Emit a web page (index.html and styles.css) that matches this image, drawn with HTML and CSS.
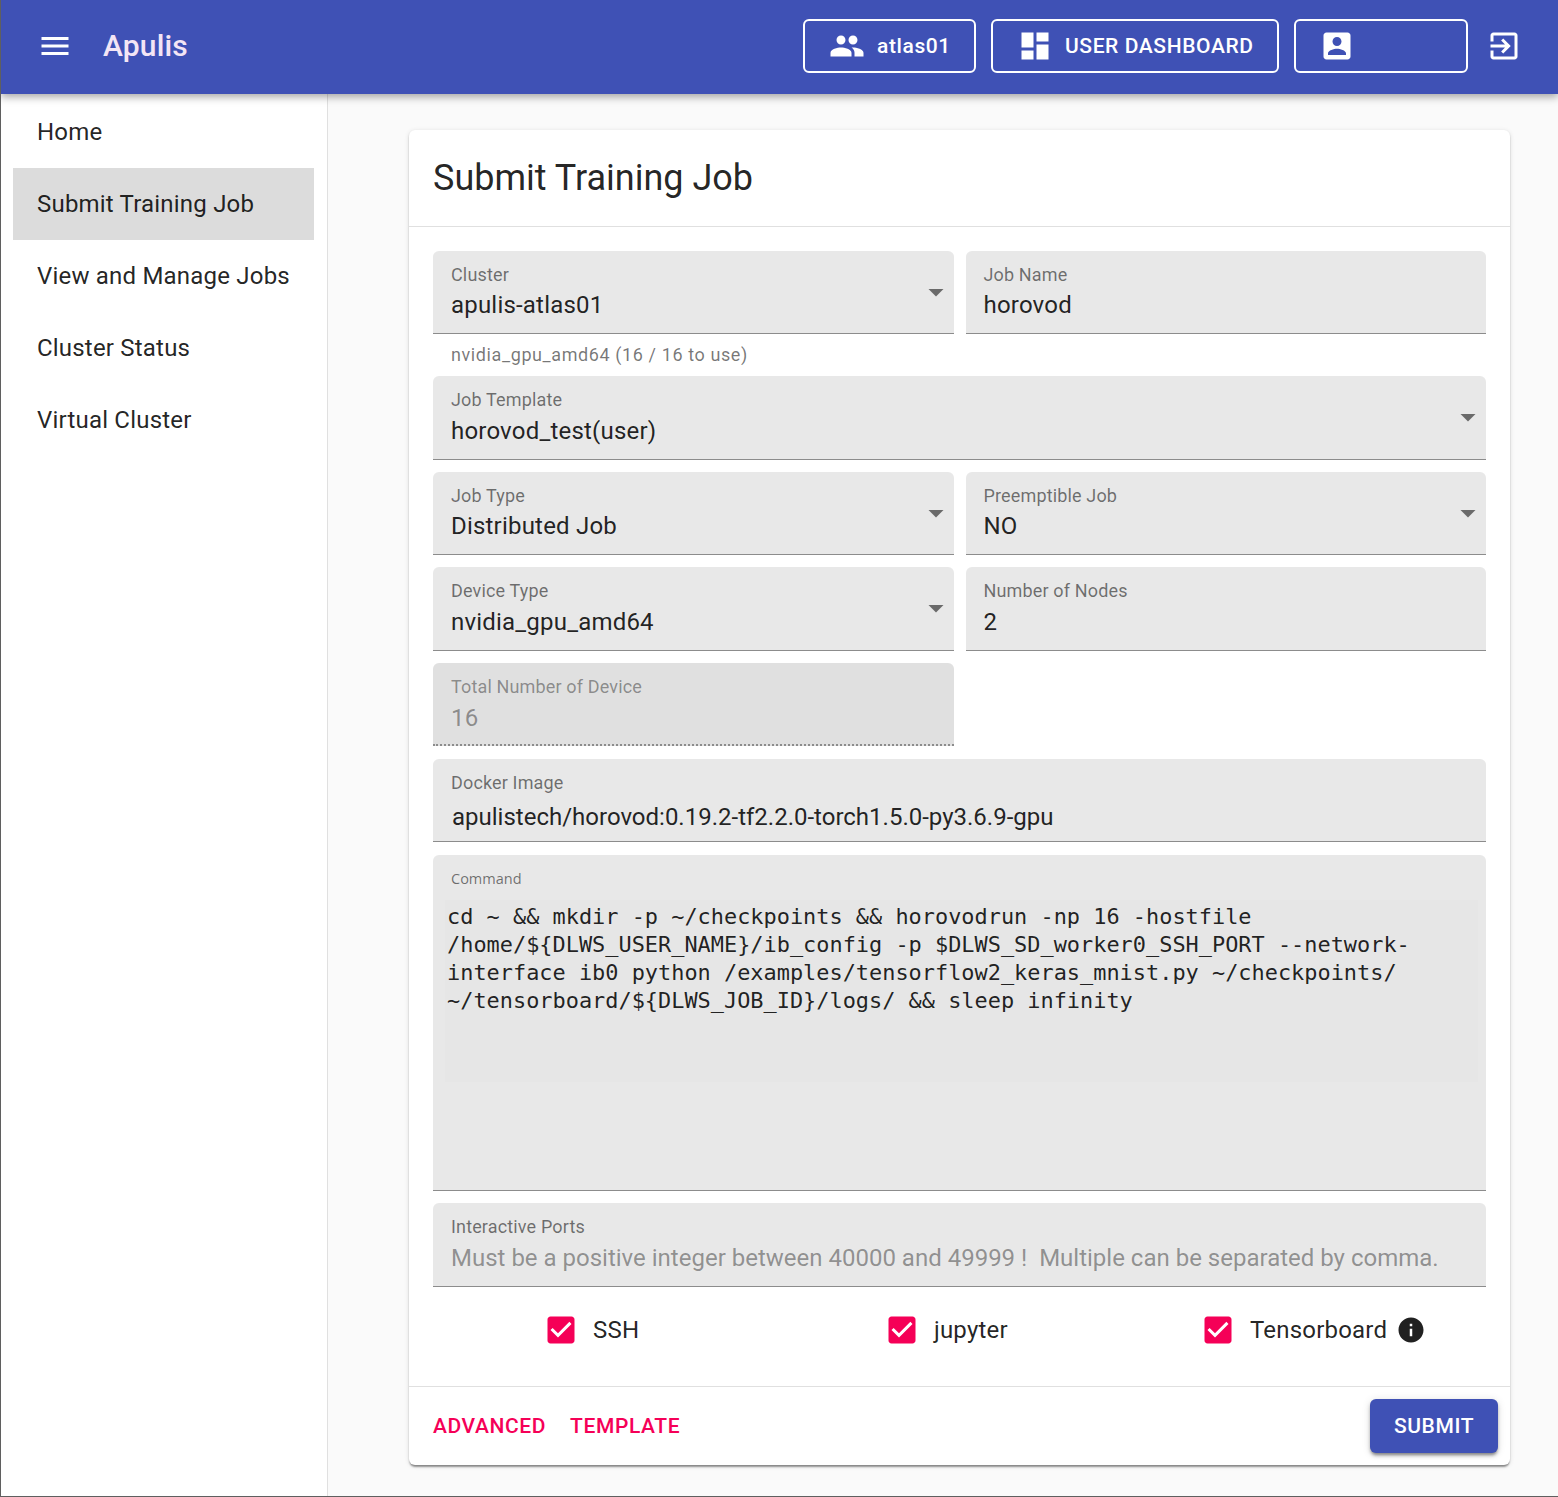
FILE: index.html
```html
<!DOCTYPE html>
<html lang="en">
<head>
    <meta charset="UTF-8">
    <meta name="viewport" content="width=device-width, initial-scale=1.0">
    <title>Submit Training Job</title>
    <link rel="stylesheet" href="styles.css">
</head>
<body>
    <header class="app-bar">
        <svg class="icon menu-icon" viewBox="0 0 24 24"><path d="M3 18h18v-2H3v2zm0-5h18v-2H3v2zm0-7v2h18V6H3z"/></svg>
        <div class="brand">Apulis</div>
        <div class="bar-actions">
            <div class="bar-button team-button">
                <svg class="icon" viewBox="0 0 24 24"><path d="M16 11c1.66 0 2.99-1.34 2.99-3S17.66 5 16 5c-1.66 0-3 1.34-3 3s1.34 3 3 3zm-8 0c1.66 0 2.99-1.34 2.99-3S9.66 5 8 5C6.34 5 5 6.34 5 8s1.34 3 3 3zm0 2c-2.33 0-7 1.17-7 3.5V19h14v-2.5c0-2.33-4.67-3.5-7-3.5zm8 0c-.29 0-.62.02-.97.05 1.16.84 1.97 1.97 1.97 3.45V19h6v-2.5c0-2.33-4.67-3.5-7-3.5z"/></svg>
                <span>atlas01</span>
            </div>
            <div class="bar-button dash-button">
                <svg class="icon" viewBox="0 0 24 24"><path d="M3 13h8V3H3v10zm0 8h8v-6H3v6zm10 0h8V11h-8v10zm0-18v6h8V3h-8z"/></svg>
                <span>USER DASHBOARD</span>
            </div>
            <div class="bar-button account-button">
                <svg class="icon" viewBox="0 0 24 24"><path d="M3 5v14c0 1.1.89 2 2 2h14c1.1 0 2-.9 2-2V5c0-1.1-.9-2-2-2H5c-1.11 0-2 .9-2 2zm12 4c0 1.66-1.34 3-3 3s-3-1.34-3-3 1.34-3 3-3 3 1.34 3 3zm-9 8c0-2 4-3.1 6-3.1s6 1.1 6 3.1v1H6v-1z"/></svg>
            </div>
            <svg class="icon exit-icon" viewBox="0 0 24 24"><path d="M10.09 15.59L11.5 17l5-5-5-5-1.41 1.41L12.67 11H3v2h9.67l-2.58 2.59zM19 3H5c-1.11 0-2 .9-2 2v4h2V5h14v14H5v-4H3v4c0 1.1.89 2 2 2h14c1.1 0 2-.9 2-2V5c0-1.1-.9-2-2-2z"/></svg>
        </div>
    </header>

    <div class="page">
        <nav class="sidebar">
            <div class="nav-item">Home</div>
            <div class="nav-item selected">Submit Training Job</div>
            <div class="nav-item">View and Manage Jobs</div>
            <div class="nav-item">Cluster Status</div>
            <div class="nav-item">Virtual Cluster</div>
        </nav>

        <main class="main">
            <section class="card">
                <h1 class="card-title">Submit Training Job</h1>
                <div class="form">
                    <div class="field">
                        <div class="field-label">Cluster</div>
                        <div class="field-value">apulis-atlas01</div>
                        <svg class="arrow" viewBox="0 0 24 24"><path d="M7 10l5 5 5-5z"/></svg>
                    </div>
                    <div class="field">
                        <div class="field-label">Job Name</div>
                        <div class="field-value">horovod</div>
                    </div>
                    <div class="helper wide">nvidia_gpu_amd64 (16 / 16 to use)</div>
                    <div class="field wide template-field">
                        <div class="field-label">Job Template</div>
                        <div class="field-value">horovod_test(user)</div>
                        <svg class="arrow" viewBox="0 0 24 24"><path d="M7 10l5 5 5-5z"/></svg>
                    </div>
                    <div class="field">
                        <div class="field-label">Job Type</div>
                        <div class="field-value">Distributed Job</div>
                        <svg class="arrow" viewBox="0 0 24 24"><path d="M7 10l5 5 5-5z"/></svg>
                    </div>
                    <div class="field">
                        <div class="field-label">Preemptible Job</div>
                        <div class="field-value">NO</div>
                        <svg class="arrow" viewBox="0 0 24 24"><path d="M7 10l5 5 5-5z"/></svg>
                    </div>
                    <div class="field">
                        <div class="field-label">Device Type</div>
                        <div class="field-value">nvidia_gpu_amd64</div>
                        <svg class="arrow" viewBox="0 0 24 24"><path d="M7 10l5 5 5-5z"/></svg>
                    </div>
                    <div class="field">
                        <div class="field-label">Number of Nodes</div>
                        <div class="field-value">2</div>
                    </div>
                    <div class="field disabled">
                        <div class="field-label">Total Number of Device</div>
                        <div class="field-value">16</div>
                    </div>
                    <div class="field wide">
                        <div class="field-label">Docker Image</div>
                        <div class="field-value docker-value">apulistech/horovod:0.19.2-tf2.2.0-torch1.5.0-py3.6.9-gpu</div>
                    </div>
                    <div class="field wide command-field">
                        <div class="command-label">Command</div>
                        <div class="command-text">cd ~ &amp;&amp; mkdir -p ~/checkpoints &amp;&amp; horovodrun -np 16 -hostfile
/home/${DLWS_USER_NAME}/ib_config -p $DLWS_SD_worker0_SSH_PORT --network-
interface ib0 python /examples/tensorflow2_keras_mnist.py ~/checkpoints/
~/tensorboard/${DLWS_JOB_ID}/logs/ &amp;&amp; sleep infinity</div>
                    </div>
                    <div class="field wide">
                        <div class="field-label">Interactive Ports</div>
                        <div class="field-value placeholder">Must be a positive integer between 40000 and 49999 !&nbsp; Multiple can be separated by comma.</div>
                    </div>
                </div>
                <div class="checks">
                    <div class="check">
                        <svg class="check-box" viewBox="0 0 24 24"><path d="M19 3H5c-1.11 0-2 .9-2 2v14c0 1.1.89 2 2 2h14c1.11 0 2-.9 2-2V5c0-1.1-.89-2-2-2zm-9 14l-5-5 1.41-1.41L10 14.17l7.59-7.59L19 8l-9 9z"/></svg>
                        <span>SSH</span>
                    </div>
                    <div class="check">
                        <svg class="check-box" viewBox="0 0 24 24"><path d="M19 3H5c-1.11 0-2 .9-2 2v14c0 1.1.89 2 2 2h14c1.11 0 2-.9 2-2V5c0-1.1-.89-2-2-2zm-9 14l-5-5 1.41-1.41L10 14.17l7.59-7.59L19 8l-9 9z"/></svg>
                        <span>jupyter</span>
                    </div>
                    <div class="check">
                        <svg class="check-box" viewBox="0 0 24 24"><path d="M19 3H5c-1.11 0-2 .9-2 2v14c0 1.1.89 2 2 2h14c1.11 0 2-.9 2-2V5c0-1.1-.89-2-2-2zm-9 14l-5-5 1.41-1.41L10 14.17l7.59-7.59L19 8l-9 9z"/></svg>
                        <span>Tensorboard</span>
                        <svg class="info-icon" viewBox="0 0 24 24"><path d="M12 2C6.48 2 2 6.48 2 12s4.48 10 10 10 10-4.48 10-10S17.52 2 12 2zm1 15h-2v-6h2v6zm0-8h-2V7h2v2z"/></svg>
                    </div>
                </div>
                <div class="card-actions">
                    <div class="text-button">ADVANCED</div>
                    <div class="text-button">TEMPLATE</div>
                    <div class="submit-button">SUBMIT</div>
                </div>
            </section>
        </main>
    </div>
</body>
</html>
```

FILE: styles.css
```css
html, body {
    height: 100%;
}
body {
    margin: 0;
    font-family: Roboto, Arial, sans-serif;
    background-color: #fafafa;
    color: rgba(0, 0, 0, 0.87);
    display: flex;
    flex-direction: column;
    border-left: 1px solid #5f5f5f;
    border-bottom: 1px solid #5f5f5f;
    box-sizing: border-box;
    overflow: hidden;
}
.icon {
    width: 36px;
    height: 36px;
    fill: #fff;
    flex-shrink: 0;
}
.app-bar {
    height: 94px;
    flex-shrink: 0;
    box-sizing: border-box;
    background: #3f51b5;
    display: flex;
    align-items: center;
    padding: 0 36px 2px 36px;
    color: #fff;
    box-shadow: 0 3px 8px rgba(0, 0, 0, 0.35);
    position: relative;
}
.brand {
    font-size: 30px;
    font-weight: 500;
    letter-spacing: 0.15px;
    margin: 0 0 2px 30px;
    color: #f3e5f5;
}
.bar-actions {
    margin-left: auto;
    display: flex;
    align-items: center;
}
.bar-button {
    height: 54px;
    box-sizing: border-box;
    border: 2px solid #fff;
    border-radius: 6px;
    display: flex;
    align-items: center;
    gap: 12px;
    font-size: 21px;
    font-weight: 500;
    letter-spacing: 0.6px;
}
.team-button {
    width: 173px;
    padding-left: 24px;
}
.dash-button {
    width: 288px;
    margin-left: 15px;
    padding-left: 24px;
}
.account-button {
    width: 174px;
    margin-left: 15px;
    padding-left: 23px;
}
.exit-icon {
    margin-left: 18px;
}
.page {
    flex: 1;
    display: flex;
    min-height: 0;
}
.sidebar {
    width: 327px;
    flex-shrink: 0;
    box-sizing: border-box;
    background: #fff;
    border-right: 1px solid #e0e0e0;
    padding: 2px 13px 0 12px;
}
.nav-item {
    height: 72px;
    line-height: 72px;
    padding-left: 24px;
    font-size: 24px;
    letter-spacing: 0.2px;
}
.nav-item.selected {
    background: #dcdcdc;
}
.main {
    flex: 1;
    padding: 36px 48px 0 81px;
}
.card {
    background: #fff;
    border-radius: 6px;
    height: 1335px;
    display: flex;
    flex-direction: column;
    box-shadow: 0 3px 2px -1px rgba(0, 0, 0, 0.35), 0 1px 2px rgba(0, 0, 0, 0.14), 0 1px 5px rgba(0, 0, 0, 0.12);
}
.card-title {
    margin: 0;
    height: 96px;
    line-height: 97px;
    padding-left: 24px;
    font-size: 36px;
    font-weight: 400;
    border-bottom: 1px solid #e0e0e0;
}
.form {
    padding: 23.9px 24px 0;
    display: grid;
    grid-template-columns: 1fr 1fr;
    column-gap: 12px;
    row-gap: 12.35px;
}
.wide {
    grid-column: 1 / 3;
}
.field {
    position: relative;
    box-sizing: border-box;
    height: 83.35px;
    background: #e8e8e8;
    border-radius: 6px 6px 0 0;
    border-bottom: 1px solid #8c8c8c;
    padding: 13px 18px 0;
}
.template-field {
    margin-bottom: -0.35px;
}
.field-label {
    font-size: 18px;
    line-height: 21px;
    letter-spacing: 0.15px;
    color: rgba(0, 0, 0, 0.54);
}
.field-value {
    font-size: 24px;
    line-height: 34px;
    margin-top: 3.5px;
    letter-spacing: 0.2px;
    white-space: nowrap;
}
.docker-value {
    margin: 7px 0 0 1px;
    letter-spacing: 0;
}
.placeholder {
    letter-spacing: 0;
    color: rgba(0, 0, 0, 0.4);
}
.arrow {
    position: absolute;
    right: 0;
    top: 23px;
    width: 36px;
    height: 36px;
    fill: rgba(0, 0, 0, 0.54);
}
.disabled {
    background: #e0e0e0;
    border-bottom: 2px dotted #8c8c8c;
}
.disabled .field-label,
.disabled .field-value {
    color: rgba(0, 0, 0, 0.4);
}
.helper {
    font-size: 18px;
    line-height: 21px;
    height: 21px;
    margin: -3px 0 -0.6px 18px;
    letter-spacing: 0.6px;
    color: rgba(0, 0, 0, 0.54);
}
.command-field {
    height: 336px;
    margin-top: 0.5px;
    padding: 14px 8px 0 12px;
}
.command-label {
    font-family: "Open Sans", sans-serif;
    font-size: 14.5px;
    line-height: 20px;
    margin-left: 6px;
    color: rgba(0, 0, 0, 0.54);
}
.command-text {
    margin-top: 11px;
    height: 182px;
    padding: 3px 0 0 2px;
    box-sizing: border-box;
    font-family: "DejaVu Sans Mono", monospace;
    font-size: 21.92px;
    line-height: 28px;
    white-space: pre;
    background: #e6e6e6;
}
.checks {
    display: grid;
    grid-template-columns: 341px 316px 1fr;
    padding: 25px 0 0 138px;
    height: 99.1px;
    box-sizing: border-box;
}
.check {
    display: flex;
    align-items: center;
    height: 36px;
    font-size: 24px;
    letter-spacing: 0.2px;
}
.check-box {
    width: 36px;
    height: 36px;
    fill: #f50057;
    margin-left: -4px;
    margin-right: 14px;
    flex-shrink: 0;
}
.info-icon {
    width: 30px;
    height: 30px;
    fill: #212121;
    margin-left: 9px;
}
.card-actions {
    flex: 1;
    border-top: 1px solid #e0e0e0;
    display: flex;
    align-items: center;
    padding: 0 12px 0 24px;
    gap: 24px;
}
.text-button {
    font-size: 21px;
    font-weight: 500;
    letter-spacing: 0.6px;
    color: #f50057;
}
.submit-button {
    margin-left: auto;
    width: 128px;
    height: 54px;
    line-height: 54px;
    text-align: center;
    background: #3f51b5;
    color: #fff;
    border-radius: 6px;
    font-size: 21px;
    font-weight: 500;
    letter-spacing: 0.6px;
    box-shadow: 0 3px 3px -1px rgba(0, 0, 0, 0.35), 0 3px 4px rgba(0, 0, 0, 0.14), 0 1px 8px rgba(0, 0, 0, 0.12);
}
```
